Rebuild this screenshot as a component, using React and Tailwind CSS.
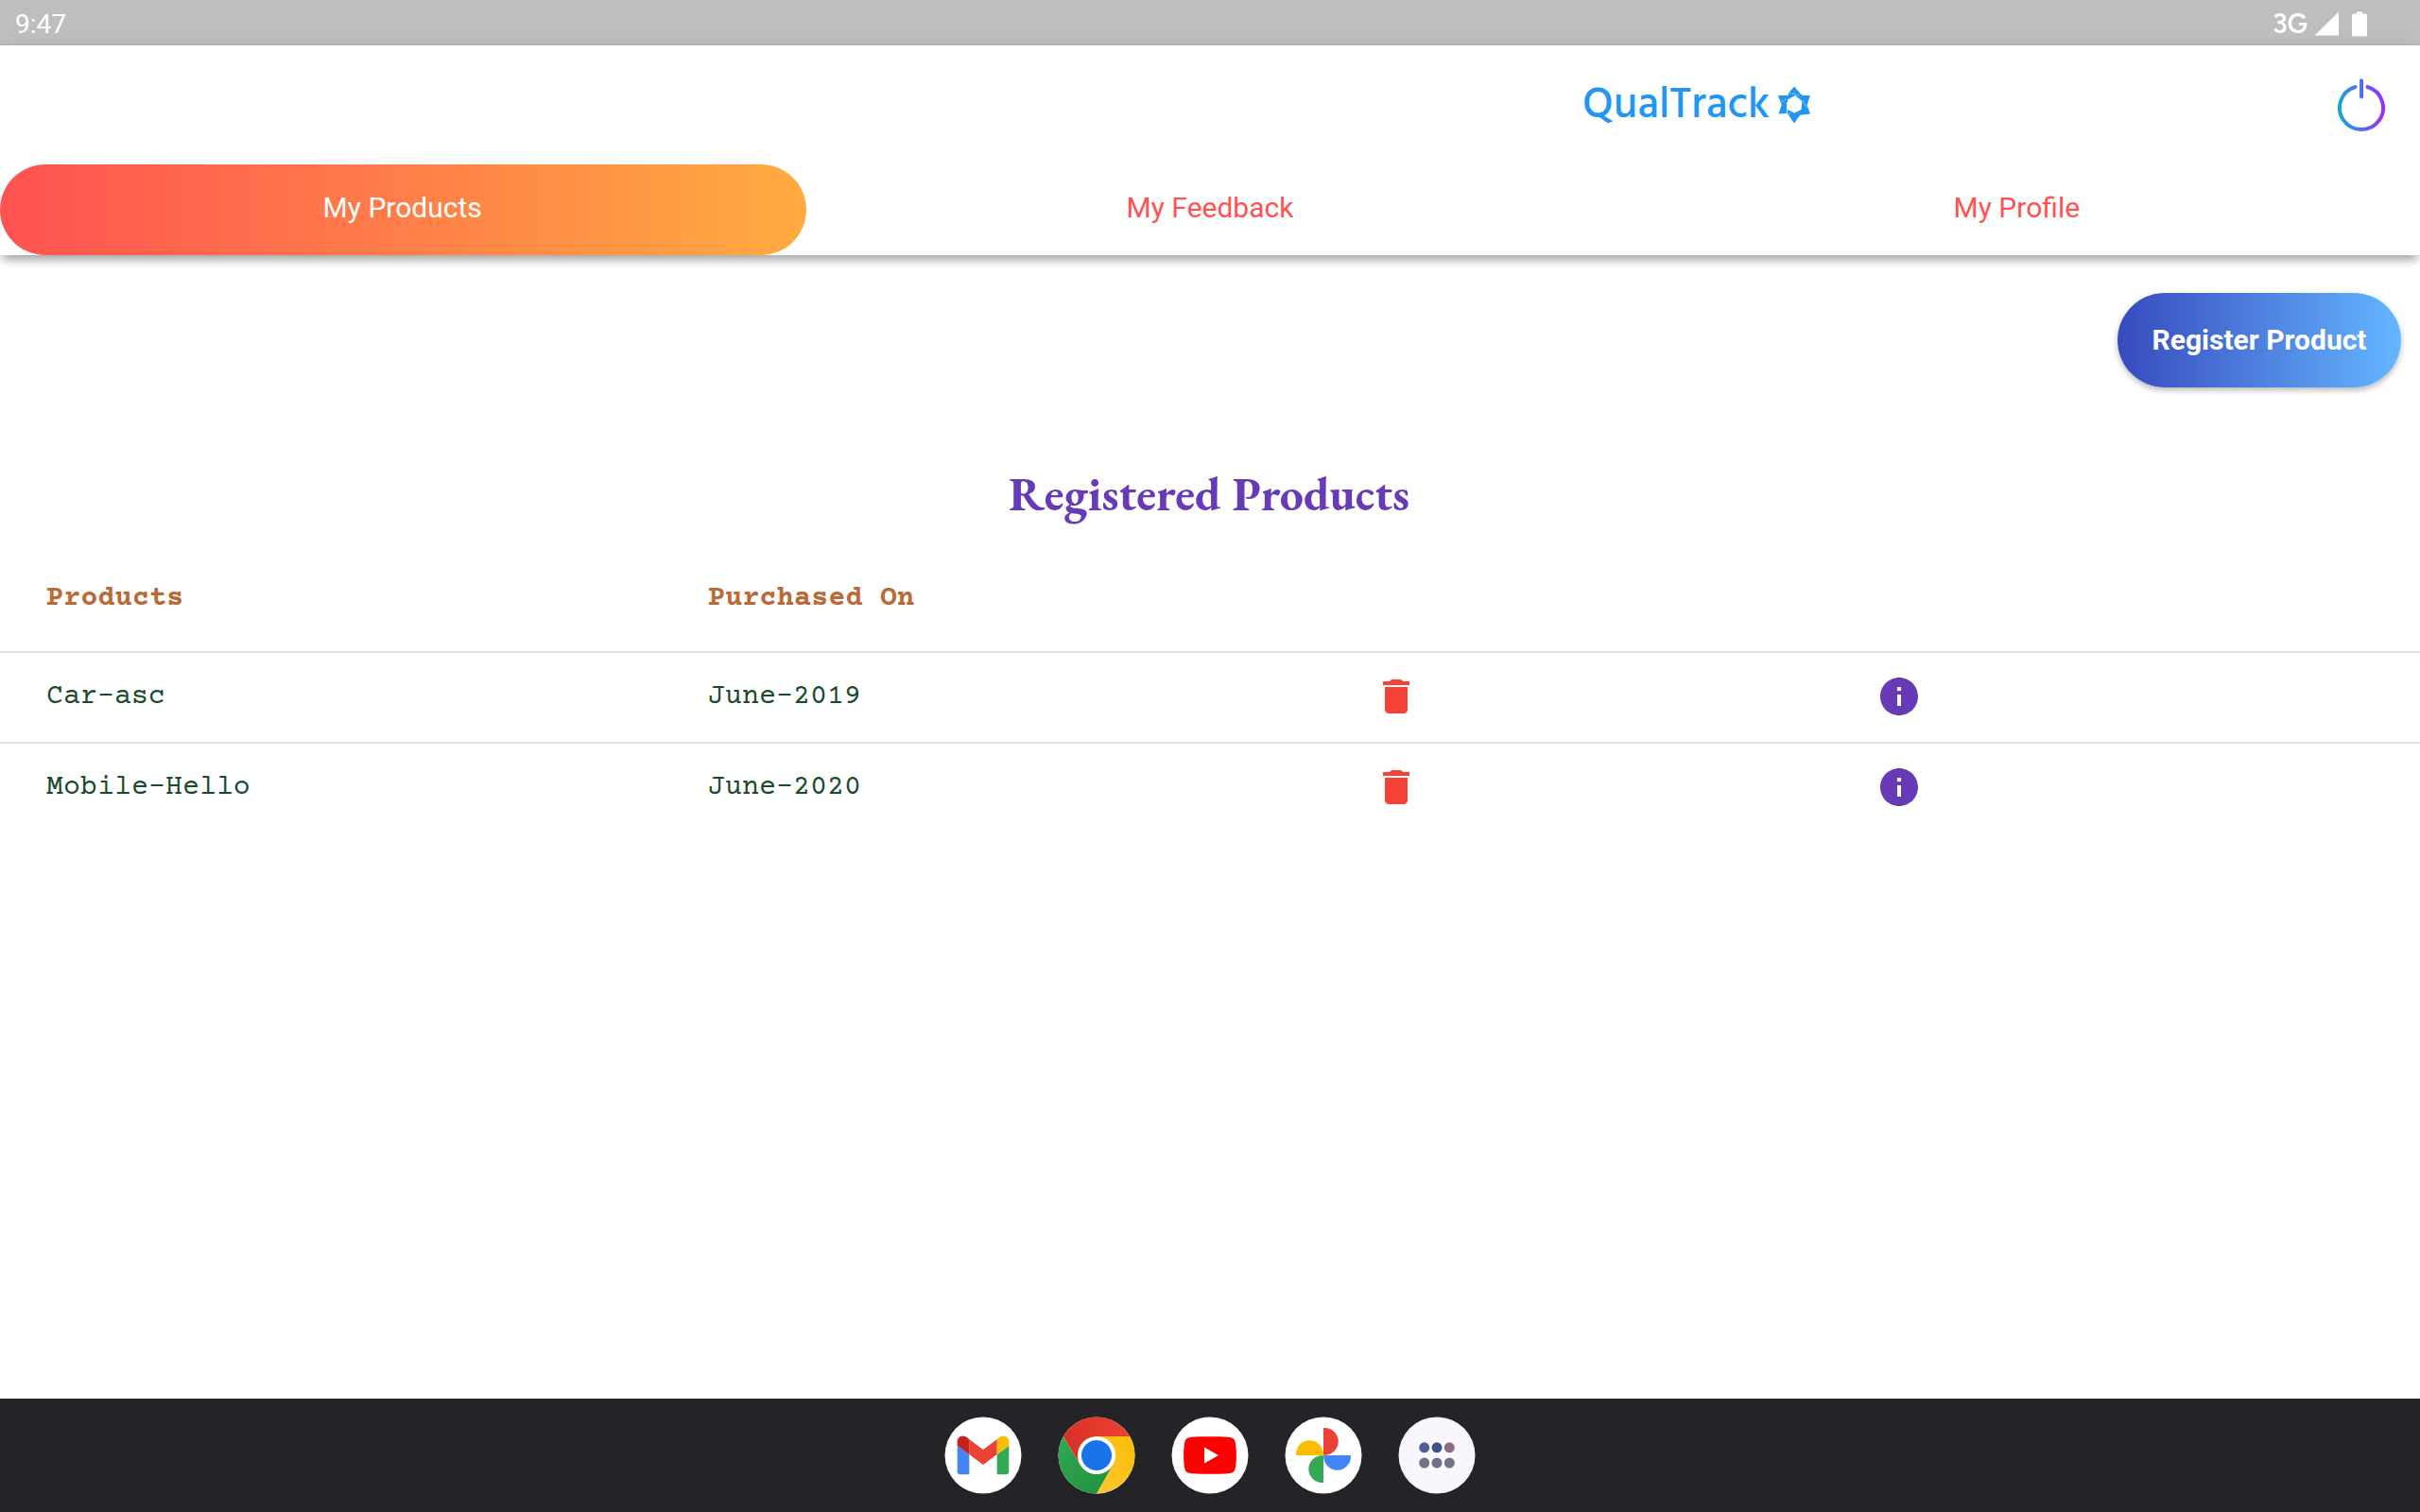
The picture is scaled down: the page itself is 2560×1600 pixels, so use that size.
import React from 'react';

const tabs = ['My Products', 'My Feedback', 'My Profile'];

const products = [
  { name: 'Car-asc', date: 'June-2019' },
  { name: 'Mobile-Hello', date: 'June-2020' },
];

function StatusBar() {
  return (
    <div className="flex h-12 items-center justify-between border-b border-[#b4b4b4] bg-[#bebebe] pt-[5px] pr-14 pl-4 font-[Roboto,sans-serif] text-[28px] leading-8 text-white">
      <span>9:47</span>
      <div className="flex items-center">
        <span className="-mt-[3px] font-['Figtree','Roboto',sans-serif] text-[28.5px] font-semibold">3G</span>
        <svg className="-mt-[2px] ml-[7px] h-[26px] w-[26px]" viewBox="0 0 26 26" fill="#fff">
          <path d="M26 0.5V25.5H0.6Z" />
        </svg>
        <svg className="-mt-[2px] ml-[14px] h-[27px] w-4" viewBox="0 0 16 27" fill="#fff">
          <path d="M5 0.5h6v2h3.5q1.5 0 1.5 1.5v21q0 1.5-1.5 1.5h-13q-1.5 0-1.5-1.5v-21q0-1.500 1.500-1.500h3.500z" />
        </svg>
      </div>
    </div>
  );
}

function StarIcon() {
  return (
    <svg className="mt-[7px] ml-[8px] h-10 w-[34px]" viewBox="-17 -20 34 40">
      <path
        fill="#2196f3"
        fillRule="evenodd"
        d="M0-19.500L6.500-12 9-10H17L13.600 0 17 9.500 8 10.400 6 11 0 19.500-6 11-8 9-16.600 9.500-13.300 0-17-10H-6.500L-5.600-13ZM1-10L-7-5.500V5L0 8.500 7.500 5 8.300-4Z"
      />
      <g stroke="#fff" strokeWidth="0.9" fill="none">
        <path d="M-7.500-3V11" />
        <path d="M9-4.500L13.500 3.500" strokeDasharray="1.200 1.200" />
        <path d="M-4.500-12.500L6-9.500" strokeDasharray="1.200 1.500" />
        <path d="M-14.500-2.500L-8.500-6" strokeDasharray="1.200 1.500" />
        <path d="M-5.500 8.500V12" strokeDasharray="1.200 1.200" />
      </g>
    </svg>
  );
}

function PowerIcon() {
  return (
    <svg className="mt-[1px] h-[60px] w-[52px]" viewBox="-26 -32 52 60" fill="none" strokeWidth="4" strokeLinecap="round">
      <defs>
        <linearGradient id="ring" gradientUnits="userSpaceOnUse" x1="-25" x2="25" y1="0" y2="0">
          <stop offset="0" stopColor="#12abd8" />
          <stop offset="1" stopColor="#9d2bff" />
        </linearGradient>
        <linearGradient id="bar" gradientUnits="userSpaceOnUse" x1="-2" x2="2" y1="0" y2="0">
          <stop offset="0" stopColor="#12a5dc" />
          <stop offset="1" stopColor="#9a35fb" />
        </linearGradient>
      </defs>
      <path d="M-6.500-22A23 23 0 1 0 6.500-22" stroke="url(#ring)" />
      <path d="M0-28.800L0.010-11.500" stroke="url(#bar)" />
    </svg>
  );
}

function Header() {
  return (
    <header className="relative bg-white shadow-[0_7px_10px_-3px_rgba(0,0,0,0.36),0_2px_14px_rgba(0,0,0,0.08)]">
      <div className="flex h-[126px] items-center pr-9 pl-[1674px]">
        <div className="-mt-[7px] flex h-[60px] items-center text-[#2196f3]">
          <h1 className="w-[199px] pt-[10px] font-['Hind','Noto_Sans',sans-serif] text-[45.8px] leading-[60px] font-medium whitespace-nowrap">QualTrack</h1>
          <StarIcon />
        </div>
        <div className="ml-auto">
          <PowerIcon />
        </div>
      </div>
      <nav className="grid h-24 grid-cols-3 font-[Roboto,sans-serif] text-[30px] leading-9">
        {tabs.map((tab, i) => (
          <button
            key={tab}
            className={
              i === 0
                ? 'rounded-full bg-linear-to-r/srgb from-[#ff5252] to-[#ffab40] pr-[2px] pb-1 text-white'
                : 'pb-1 text-[#ff5252]'
            }
          >
            {tab}
          </button>
        ))}
      </nav>
    </header>
  );
}

function TrashIcon() {
  return (
    <svg className="h-12 w-12" viewBox="0 0 24 24" fill="#f44336">
      <path d="M6 19c0 1.100.9 2 2 2h8c1.100 0 2-.9 2-2V7H6v12zM19 4h-3.500l-1-1h-5l-1 1H5v2h14V4z" />
    </svg>
  );
}

function InfoIcon() {
  return (
    <svg className="h-12 w-12" viewBox="0 0 24 24" fill="#673ab7">
      <path d="M12 2C6.480 2 2 6.480 2 12s4.480 10 10 10 10-4.480 10-10S17.520 2 12 2zm1 15h-2v-6h2v6zm0-8h-2V7h2v2z" />
    </svg>
  );
}

function ProductTable() {
  return (
    <section className="font-['Courier_Prime','Liberation_Mono',monospace] text-[30px] leading-9">
      <div className="grid h-[112px] grid-cols-[700px_1fr] items-center border-b-2 border-[#e0e0e0] pl-[49px] font-bold tracking-[0.2px] text-[#b96a37]">
        <span>Products</span>
        <span>Purchased On</span>
      </div>
      {products.map((p, i) => (
        <div
          key={p.name}
          className={
            'grid h-24 grid-cols-[700px_704px_532px_1fr] items-center border-b-2 pl-[49px] text-[#184b29] ' +
            (i < products.length - 1 ? 'border-[#e0e0e0]' : 'border-transparent')
          }
        >
          <span>{p.name}</span>
          <span>{p.date}</span>
          <button className="pb-[2px]"><TrashIcon /></button>
          <button className="pb-[2px]"><InfoIcon /></button>
        </div>
      ))}
    </section>
  );
}

function DockIcon({ fill = '#fff', children }) {
  return (
    <svg className="h-[82px] w-[82px]" viewBox="-41 -41 82 82">
      <circle r="40.500" fill={fill} />
      {children}
    </svg>
  );
}

function Dock() {
  const petal = 'M0-29H1.300A14.400 14.400 0 0 1 1.300-0.200H0Z';
  return (
    <footer className="flex h-[120px] items-center justify-center gap-[38px] bg-[#242428]">
      <DockIcon>
        <path fill="#4285f4" d="M-27.300-10V17Q-27.300 20.200-24 20.200H-14.700V-1Z" />
        <path fill="#34a853" d="M27.300-10V17Q27.300 20.200 24 20.200H14.700V-1Z" />
        <path fill="#ea4335" d="M-14.700-17L0-6 14.700-17V-1L0 10-14.700-1Z" />
        <path fill="#c5221f" d="M-27.300-10V-14.500C-27.300-20.500-20.500-23-15.700-17.800L-14.700-17V-1Z" />
        <path fill="#fbbc04" d="M27.300-10V-14.500C27.300-20.500 20.500-23 15.700-17.800L14.700-17V-1Z" />
      </DockIcon>
      <DockIcon>
        <defs>
          <linearGradient id="cr" x1="0" x2="1" y1="0" y2="0">
            <stop offset="0" stopColor="#d93025" />
            <stop offset="1" stopColor="#ea4335" />
          </linearGradient>
          <linearGradient id="cy" x1="0" x2="1" y1="1" y2="0">
            <stop offset="0" stopColor="#fcc934" />
            <stop offset="1" stopColor="#fbbc04" />
          </linearGradient>
          <linearGradient id="cg" x1="1" x2="0" y1="1" y2="0">
            <stop offset="0" stopColor="#1e8e3e" />
            <stop offset="1" stopColor="#34a853" />
          </linearGradient>
        </defs>
        <path fill="url(#cr)" d="M0 0L-17.300 10-35.200-20A40.500 40.500 0 0 1 35.200-20H0Z" />
        <path fill="url(#cy)" d="M0 0V-20H35.200A40.500 40.500 0 0 1 0 40.500L17.300 10Z" />
        <path fill="url(#cg)" d="M0 0L17.300 10 0 40.500A40.500 40.500 0 0 1-35.200-20L-17.300 10Z" />
        <circle r="20" fill="#fff" />
        <circle r="16" fill="#1a73e8" />
      </DockIcon>
      <DockIcon>
        <path
          fill="#f00"
          d="M0-19.800C12-19.800 18-19.600 22-18.800Q26-18 26.700-14C28.300-6 28.300 6 26.700 14Q26 18 22 18.800C18 19.600 12 19.800 0 19.800S-18 19.600-22 18.800Q-26 18-26.700 14C-28.300 6-28.300-6-26.700-14Q-26-18-22-18.800C-18-19.600-12-19.800 0-19.800Z"
        />
        <path fill="#fff" d="M-6-8.500L9 0-6 8.500Z" />
      </DockIcon>
      <DockIcon>
        <path fill="#ea4335" d={petal} />
        <path fill="#4285f4" d={petal} transform="rotate(90)" />
        <path fill="#34a853" d={petal} transform="rotate(180)" />
        <path fill="#fbbc04" d={petal} transform="rotate(270)" />
      </DockIcon>
      <DockIcon fill="#f9f7fd">
        <circle cx="-13.300" cy="-8.200" r="5.500" fill="#4d5f96" />
        <circle cx="0" cy="-8.200" r="5.500" fill="#3f5087" />
        <circle cx="13.300" cy="-8.200" r="5.500" fill="#8d6a86" />
        <circle cx="-13.300" cy="8" r="5.500" fill="#6f7387" />
        <circle cx="0" cy="8" r="5.500" fill="#6f7387" />
        <circle cx="13.300" cy="8" r="5.500" fill="#6f7387" />
      </DockIcon>
    </footer>
  );
}

export default function App() {
  return (
    <div className="flex h-[1600px] w-[2560px] flex-col overflow-hidden bg-white">
      <StatusBar />
      <Header />
      <main className="flex-1">
        <div className="flex justify-end pt-10 pr-5">
          <button className="h-[100px] w-[300px] rounded-full bg-linear-to-r/srgb from-[#374abe] to-[#64b6ff] font-[Roboto,sans-serif] text-[30px] leading-9 font-bold text-white shadow-[0_3px_6px_rgba(0,0,0,0.28)]">
            Register Product
          </button>
        </div>
        <h2 className="mt-[83px] mb-[26px] pr-[2px] text-center font-['EB_Garamond','Liberation_Serif',serif] text-[50px] leading-[60px] font-bold text-[#673ab7]">
          Registered Products
        </h2>
        <ProductTable />
      </main>
      <Dock />
    </div>
  );
}
